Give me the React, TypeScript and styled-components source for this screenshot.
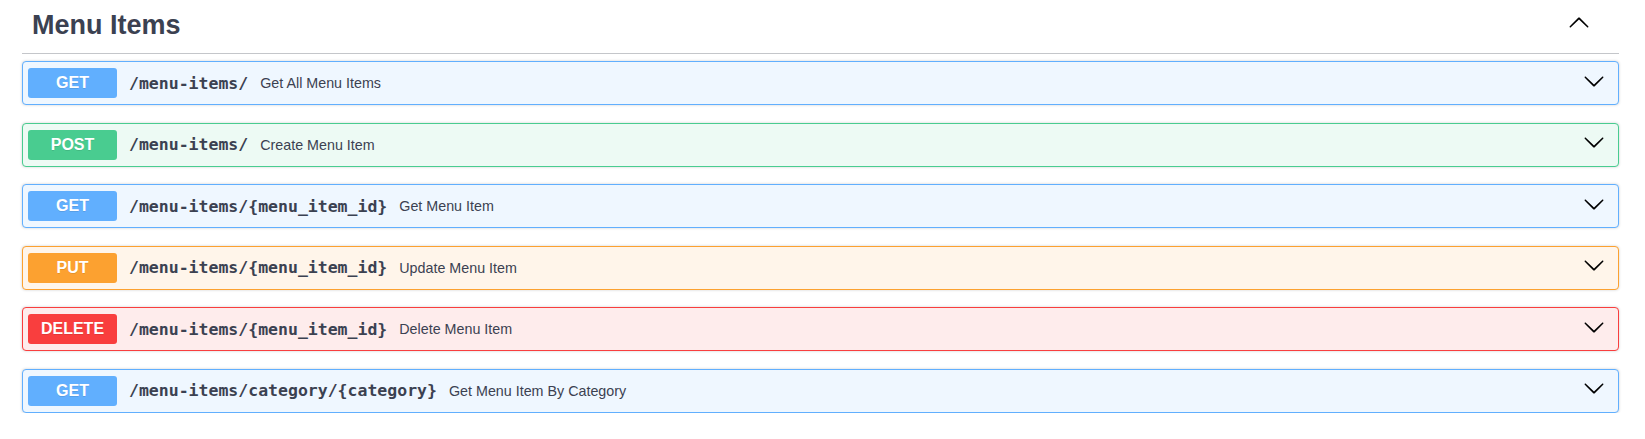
import styled, { createGlobalStyle } from 'styled-components'

const GlobalStyle = createGlobalStyle`
  body {
    margin: 0;
    background: #fff;
    font-family: 'Liberation Sans', Arial, sans-serif;
    color: #3b4151;
  }
`

type Method = 'GET' | 'POST' | 'PUT' | 'DELETE'

const palette: Record<Method, { main: string; tint: string }> = {
  GET: { main: '#61affe', tint: '#eff7ff' },
  POST: { main: '#49cc90', tint: '#edfaf4' },
  PUT: { main: '#fca130', tint: '#fff5ea' },
  DELETE: { main: '#f93e3e', tint: '#feecec' },
}

const Wrapper = styled.main`
  padding: 0 26px 0 22px;
`

const TagHeader = styled.header`
  display: flex;
  align-items: flex-start;
  justify-content: space-between;
  padding: 12px 29px 14px 10px;
  border-bottom: 1px solid rgba(59, 65, 81, 0.3);
`

const TagTitle = styled.h3`
  margin: 0;
  font-size: 27px;
  line-height: 27px;
  font-weight: 700;
  color: #3b4151;
`

const Operations = styled.section`
  display: flex;
  flex-direction: column;
  gap: 17.6px;
  margin-top: 7px;
`

const Summary = styled.div<{ $method: Method }>`
  display: flex;
  align-items: center;
  height: 44px;
  box-sizing: border-box;
  padding: 0 13px 0 5px;
  border: 1px solid ${(p) => palette[p.$method].main};
  border-radius: 4px;
  background: ${(p) => palette[p.$method].tint};
  box-shadow: 0 0 3px rgba(0, 0, 0, 0.19);
`

const MethodBadge = styled.span<{ $method: Method }>`
  flex: none;
  width: 89px;
  height: 30px;
  line-height: 30px;
  border-radius: 3px;
  background: ${(p) => palette[p.$method].main};
  color: #fff;
  font-size: 16px;
  font-weight: 700;
  text-align: center;
  text-shadow: 0 1px 0 rgba(0, 0, 0, 0.1);
`

const Path = styled.span`
  flex: none;
  padding: 0 11px 0 12px;
  font-family: 'DejaVu Sans Mono', 'Liberation Mono', monospace;
  font-size: 16.5px;
  font-weight: 700;
  color: #3b4151;
`

const Description = styled.span`
  flex: 1;
  padding-left: 1px;
  font-size: 14.3px;
  color: #3b4151;
`

const Arrow = styled.svg<{ $up?: boolean }>`
  flex: none;
  width: 22px;
  height: 22px;
  fill: #000;
  transform: ${(p) => (p.$up ? 'rotate(180deg)' : 'none')};
  margin-bottom: ${(p) => (p.$up ? '0' : '5px')};
`

const Chevron = ({ up }: { up?: boolean }) => (
  <Arrow $up={up} viewBox='0 0 20 20' aria-hidden='true'>
    <path d='M17.418 6.109c.272-.268.709-.268.979 0s.271.701 0 .969l-7.908 7.83c-.27.268-.707.268-.979 0l-7.908-7.830c-.27-.268-.27-.701 0-.969.271-.268.709-.268.979 0L10 13.25l7.418-7.141z' />
  </Arrow>
)

const operations: { method: Method; path: string; summary: string }[] = [
  { method: 'GET', path: '/menu-items/', summary: 'Get All Menu Items' },
  { method: 'POST', path: '/menu-items/', summary: 'Create Menu Item' },
  { method: 'GET', path: '/menu-items/{menu_item_id}', summary: 'Get Menu Item' },
  { method: 'PUT', path: '/menu-items/{menu_item_id}', summary: 'Update Menu Item' },
  { method: 'DELETE', path: '/menu-items/{menu_item_id}', summary: 'Delete Menu Item' },
  {
    method: 'GET',
    path: '/menu-items/category/{category}',
    summary: 'Get Menu Item By Category',
  },
]

const App = () => (
  <>
    <GlobalStyle />
    <Wrapper>
      <TagHeader>
        <TagTitle>Menu Items</TagTitle>
        <Chevron up />
      </TagHeader>

      <Operations>
        {operations.map((op, i) => (
          <Summary key={i} $method={op.method}>
            <MethodBadge $method={op.method}>{op.method}</MethodBadge>
            <Path>{op.path}</Path>
            <Description>{op.summary}</Description>
            <Chevron />
          </Summary>
        ))}
      </Operations>
    </Wrapper>
  </>
)

export default App
